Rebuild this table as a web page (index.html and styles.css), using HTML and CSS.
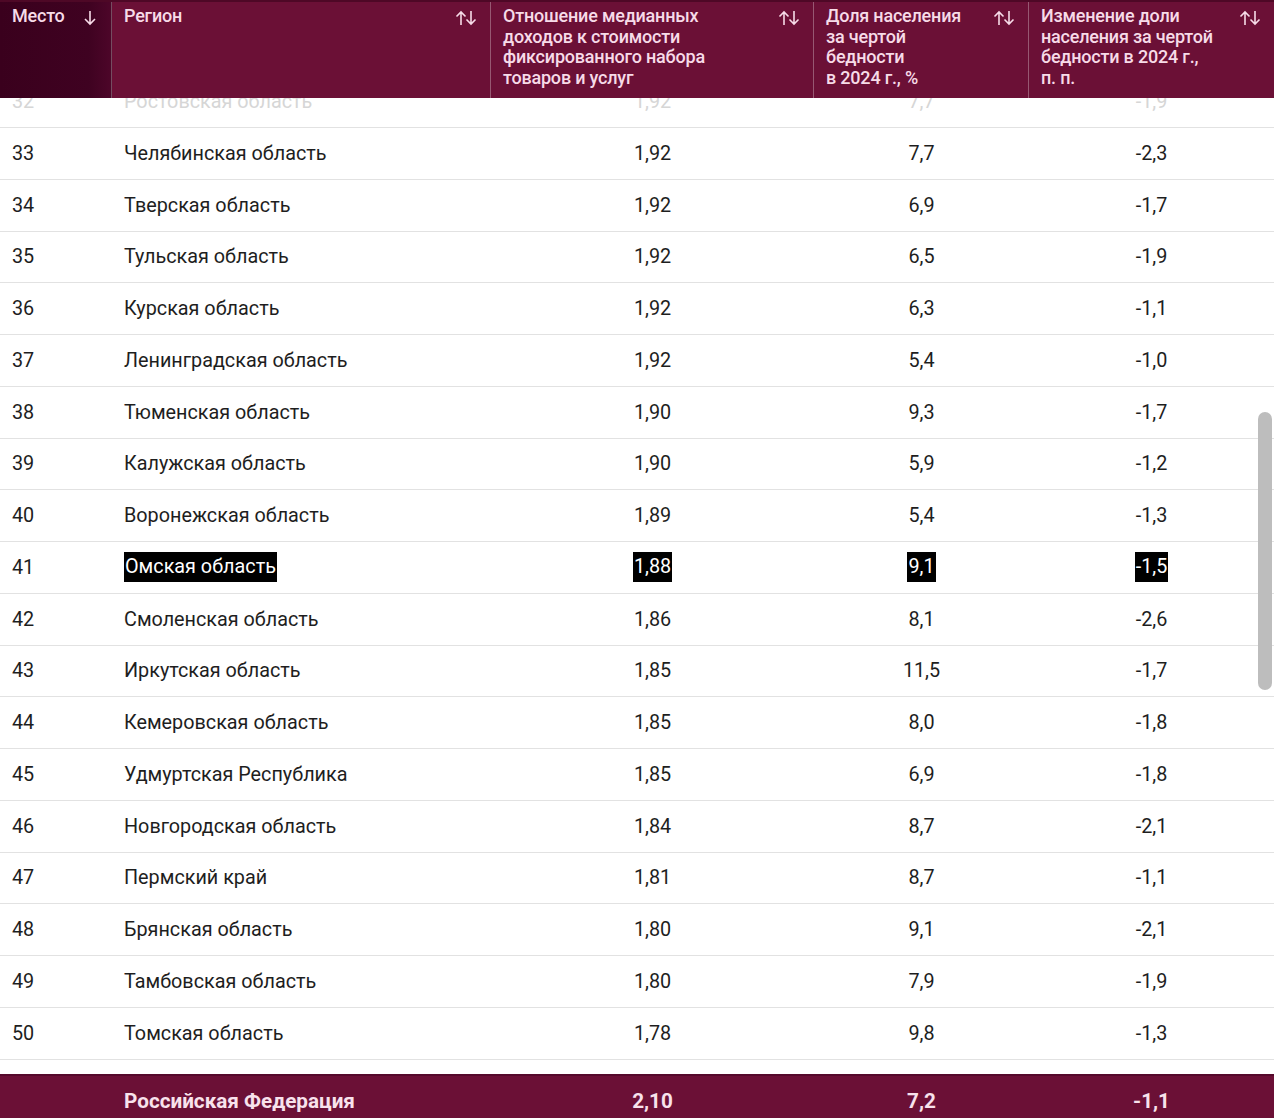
FILE: index.html
```html
<!DOCTYPE html>
<html lang="ru">
<head>
<meta charset="utf-8">
<title>Рейтинг регионов</title>
<link rel="stylesheet" href="styles.css">
</head>
<body>
<div class="page">
  <div class="thead">
    <div class="th th-first"><span class="th-text">Место</span>
      <svg class="sort" width="14" height="18" viewBox="0 0 14 18"><path d="M7 2v13M2 10l5 5 5-5" fill="none" stroke="currentColor" stroke-width="1.6"/></svg>
    </div>
    <div class="th"><span class="th-text">Регион</span>
      <svg class="sort" width="22" height="18" viewBox="0 0 22 18"><path d="M6 16V3M1.5 7.5L6 3l4.5 4.5M16 2v13M11.5 10.5L16 15l4.5-4.5" fill="none" stroke="currentColor" stroke-width="1.6"/></svg>
    </div>
    <div class="th"><span class="th-text">Отношение медианных<br>доходов к&nbsp;стоимости<br>фиксированного набора<br>товаров и&nbsp;услуг</span>
      <svg class="sort" width="22" height="18" viewBox="0 0 22 18"><path d="M6 16V3M1.5 7.5L6 3l4.5 4.5M16 2v13M11.5 10.5L16 15l4.5-4.5" fill="none" stroke="currentColor" stroke-width="1.6"/></svg>
    </div>
    <div class="th"><span class="th-text">Доля населения<br>за&nbsp;чертой<br>бедности<br>в&nbsp;2024&nbsp;г., %</span>
      <svg class="sort" width="22" height="18" viewBox="0 0 22 18"><path d="M6 16V3M1.5 7.5L6 3l4.5 4.5M16 2v13M11.5 10.5L16 15l4.5-4.5" fill="none" stroke="currentColor" stroke-width="1.6"/></svg>
    </div>
    <div class="th th-last"><span class="th-text">Изменение доли<br>населения за&nbsp;чертой<br>бедности в&nbsp;2024&nbsp;г.,<br>п.&nbsp;п.</span>
      <svg class="sort" width="22" height="18" viewBox="0 0 22 18"><path d="M6 16V3M1.5 7.5L6 3l4.5 4.5M16 2v13M11.5 10.5L16 15l4.5-4.5" fill="none" stroke="currentColor" stroke-width="1.6"/></svg>
    </div>
  </div>

  <div class="viewport">
    <div class="rows">
      <div class="row row-faded"><div class="c c-place">32</div><div class="c c-region">Ростовская область</div><div class="c c-num">1,92</div><div class="c c-num">7,7</div><div class="c c-num">-1,9</div></div>
      <div class="row"><div class="c c-place">33</div><div class="c c-region">Челябинская область</div><div class="c c-num">1,92</div><div class="c c-num">7,7</div><div class="c c-num">-2,3</div></div>
      <div class="row"><div class="c c-place">34</div><div class="c c-region">Тверская область</div><div class="c c-num">1,92</div><div class="c c-num">6,9</div><div class="c c-num">-1,7</div></div>
      <div class="row"><div class="c c-place">35</div><div class="c c-region">Тульская область</div><div class="c c-num">1,92</div><div class="c c-num">6,5</div><div class="c c-num">-1,9</div></div>
      <div class="row"><div class="c c-place">36</div><div class="c c-region">Курская область</div><div class="c c-num">1,92</div><div class="c c-num">6,3</div><div class="c c-num">-1,1</div></div>
      <div class="row"><div class="c c-place">37</div><div class="c c-region">Ленинградская область</div><div class="c c-num">1,92</div><div class="c c-num">5,4</div><div class="c c-num">-1,0</div></div>
      <div class="row"><div class="c c-place">38</div><div class="c c-region">Тюменская область</div><div class="c c-num">1,90</div><div class="c c-num">9,3</div><div class="c c-num">-1,7</div></div>
      <div class="row"><div class="c c-place">39</div><div class="c c-region">Калужская область</div><div class="c c-num">1,90</div><div class="c c-num">5,9</div><div class="c c-num">-1,2</div></div>
      <div class="row"><div class="c c-place">40</div><div class="c c-region">Воронежская область</div><div class="c c-num">1,89</div><div class="c c-num">5,4</div><div class="c c-num">-1,3</div></div>
      <div class="row"><div class="c c-place">41</div><div class="c c-region"><span class="hl">Омская область</span></div><div class="c c-num"><span class="hl">1,88</span></div><div class="c c-num"><span class="hl">9,1</span></div><div class="c c-num"><span class="hl">-1,5</span></div></div>
      <div class="row"><div class="c c-place">42</div><div class="c c-region">Смоленская область</div><div class="c c-num">1,86</div><div class="c c-num">8,1</div><div class="c c-num">-2,6</div></div>
      <div class="row"><div class="c c-place">43</div><div class="c c-region">Иркутская область</div><div class="c c-num">1,85</div><div class="c c-num">11,5</div><div class="c c-num">-1,7</div></div>
      <div class="row"><div class="c c-place">44</div><div class="c c-region">Кемеровская область</div><div class="c c-num">1,85</div><div class="c c-num">8,0</div><div class="c c-num">-1,8</div></div>
      <div class="row"><div class="c c-place">45</div><div class="c c-region">Удмуртская Республика</div><div class="c c-num">1,85</div><div class="c c-num">6,9</div><div class="c c-num">-1,8</div></div>
      <div class="row"><div class="c c-place">46</div><div class="c c-region">Новгородская область</div><div class="c c-num">1,84</div><div class="c c-num">8,7</div><div class="c c-num">-2,1</div></div>
      <div class="row"><div class="c c-place">47</div><div class="c c-region">Пермский край</div><div class="c c-num">1,81</div><div class="c c-num">8,7</div><div class="c c-num">-1,1</div></div>
      <div class="row"><div class="c c-place">48</div><div class="c c-region">Брянская область</div><div class="c c-num">1,80</div><div class="c c-num">9,1</div><div class="c c-num">-2,1</div></div>
      <div class="row"><div class="c c-place">49</div><div class="c c-region">Тамбовская область</div><div class="c c-num">1,80</div><div class="c c-num">7,9</div><div class="c c-num">-1,9</div></div>
      <div class="row"><div class="c c-place">50</div><div class="c c-region">Томская область</div><div class="c c-num">1,78</div><div class="c c-num">9,8</div><div class="c c-num">-1,3</div></div>
    </div>
  </div>

  <div class="tfoot">
    <div class="c c-place"></div>
    <div class="c c-region">Российская Федерация</div>
    <div class="c c-num">2,10</div>
    <div class="c c-num">7,2</div>
    <div class="c c-num">-1,1</div>
  </div>

  <div class="scrollbar"></div>
</div>
</body>
</html>
```

FILE: styles.css
```css
* { box-sizing: border-box; }

html, body {
  margin: 0;
  padding: 0;
  background: #ffffff;
  overflow: hidden;
}

body {
  font-family: Roboto, "Noto Sans", "Liberation Sans", sans-serif;
  color: #1e1e1e;
}

.page {
  position: relative;
  width: 1274px;
  height: 1118px;
  overflow: hidden;
}

.thead,
.row,
.tfoot {
  display: grid;
  grid-template-columns: 112px 379px 323px 215px 245px;
}

/* header */
.thead {
  height: 98px;
  background: #6b1036;
  border-top: 2px solid #4e0826;
  color: #f7dbe8;
}

.th {
  display: flex;
  justify-content: space-between;
  align-items: flex-start;
  padding: 4px 13px 0 12px;
  border-right: 1px solid rgba(255, 255, 255, 0.3);
  font-size: 18px;
  font-weight: 500;
  line-height: 20.5px;
  letter-spacing: -0.2px;
  white-space: nowrap;
}

.th-last { border-right: none; }

.th-first {
  background: linear-gradient(90deg, #3a001d 0%, #3f0221 80%, #4d0629 100%);
  padding-right: 14px;
}

.th-text { padding-right: 10px; }

.sort {
  flex: none;
  margin-top: 3px;
}

/* body */
.viewport {
  height: 962px;
  overflow: hidden;
}

.rows {
  margin-top: -21.75px;
}

.row {
  height: 51.75px;
  border-bottom: 1px solid #e2e2e2;
  font-size: 19.8px;
}

.c {
  display: flex;
  align-items: center;
  white-space: nowrap;
}

.c-place { padding-left: 12px; }
.c-region { padding-left: 12px; }
.c-num { justify-content: center; }

.row-faded { color: #d6d6d6; }

.hl {
  background: #000;
  color: #fff;
  padding: 3px 1px 3px 1px;
  line-height: 24px;
}

/* footer */
.tfoot {
  margin-top: 14px;
  height: 52px;
  background: #6b1036;
  border-top: 2px solid #55092b;
  color: #f8e2ec;
  font-size: 20.7px;
  font-weight: 700;
}

/* scrollbar overlay */
.scrollbar {
  position: absolute;
  left: 1258px;
  top: 412px;
  width: 14px;
  height: 278px;
  border-radius: 7px;
  background: #bdbdbd;
}
```
